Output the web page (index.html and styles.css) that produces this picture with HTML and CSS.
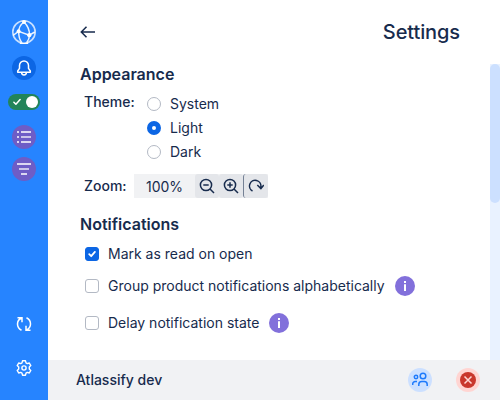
FILE: index.html
```html
<!DOCTYPE html>
<html lang="en">
<head>
<meta charset="utf-8">
<title>Settings</title>
<link rel="stylesheet" href="styles.css">
</head>
<body>
<div class="app">
  <nav class="sidebar">
    <div class="nav-group">
      <svg class="logo" viewBox="0 0 24 24" fill="none" stroke="#fff">
        <circle cx="12" cy="12" r="11.2" stroke-width="1.6" stroke-opacity=".75"/>
        <path d="M12 2C8.5 4.500 6.700 8 6.700 12c0 4.500 1 8 3 10.500M12 2c3.500 3.500 5.600 8 5.500 13-.1 3-1 5.500-2.800 7.600M1 15.500 6.500 11.300 17.300 15.200 22.800 12" stroke-width="1.500" stroke-opacity=".9"/>
        <path d="M8 23c2.500.8 5.500.8 8 0" stroke-width="1.500"/>
        <g fill="#fff" stroke="none"><circle cx="12" cy="2" r="2"/><circle cx="6.600" cy="11.300" r="2"/><circle cx="17.300" cy="15.200" r="2.100"/></g>
      </svg>
      <span class="round bell">
        <svg class="icon16" viewBox="0 0 16 16" fill="none" stroke="#fff" stroke-width="1.500" stroke-linejoin="round"><path d="M8 .9a4.500 4.500 0 0 0-4.500 4.500v3L1.700 11v1.300h12.600V11l-1.800-2.600v-3A4.500 4.500 0 0 0 8 .9ZM5.600 12.500a2.400 2.400 0 0 0 4.800 0"/></svg>
      </span>
      <span class="toggle">
        <svg class="toggle-check" viewBox="0 0 8 8" fill="none" stroke="#fff" stroke-width="1.500" stroke-linecap="round" stroke-linejoin="round"><path d="m.9 4.300 2 2L7.100 1.600"/></svg>
        <span class="knob"></span>
      </span>
      <span class="round purple">
        <svg class="icon16" viewBox="0 0 16 16" stroke="#fff" stroke-width="1.500"><path d="M5 3h10M5 13h10M1 3h2M1 8h2M1 13h2"/><path d="M5 8h10" stroke-opacity=".85"/></svg>
      </span>
      <span class="round purple filter">
        <svg class="icon16" viewBox="0 0 16 16" stroke="#fff" stroke-width="1.500"><path d="M1 3h14M5 13h6"/><path d="M3 8h10" stroke-opacity=".85"/></svg>
      </span>
    </div>
    <div class="nav-group">
      <svg class="icon16" viewBox="0 0 16 16" fill="none" stroke="#fff" stroke-width="1.500"><path d="M1.500 1.700H6v4.500M5.800 2C3 3.100 1.500 5.300 1.500 8c0 2.900 1.500 5 4 6.200M14.500 14.300H10V9.800M10.200 14c2.800-1.100 4.300-3.300 4.300-6 0-2.900-1.500-5-4-6.200"/></svg>
      <svg class="icon16 gear" viewBox="0 0 16 16" fill="none" stroke="#fff" stroke-width="1.400" stroke-linejoin="round"><path d="M6.500.8h3l.5 2 1.300.8 2-.6 1.500 2.600L13.300 7v2l1.500 1.400-1.500 2.600-2-.6-1.300.8-.5 2h-3l-.5-2-1.300-.8-2 .6-1.500-2.600L2.700 9V7L1.200 5.600 2.700 3l2 .6L6 2.800Z"/><circle cx="8" cy="8" r="2.100"/></svg>
    </div>
  </nav>
  <main class="main">
    <header class="header">
      <svg class="icon16" viewBox="0 0 16 16" fill="none" stroke="#172b4d" stroke-width="1.500"><path d="M15 8H2M6.500 2.700 1.300 8l5.200 5.300"/></svg>
      <h1>Settings</h1>
    </header>
    <div class="scroller">
      <div class="content">
        <h2>Appearance</h2>
        <div class="theme">
          <span class="label">Theme:</span>
          <div class="radios">
            <div class="radio-row"><span class="radio"></span>System</div>
            <div class="radio-row"><span class="radio selected"></span>Light</div>
            <div class="radio-row"><span class="radio"></span>Dark</div>
          </div>
        </div>
        <div class="zoom">
          <span class="label">Zoom:</span>
          <div class="zoom-group">
            <span class="percent">100%</span>
            <span class="zoom-button"><svg class="icon16" viewBox="0 0 16 16" fill="none" stroke="#172b4d" stroke-width="1.500"><circle cx="7" cy="7" r="5.600"/><path d="m11 11 4 4M4.300 7h5.400"/></svg></span>
            <span class="zoom-button"><svg class="icon16" viewBox="0 0 16 16" fill="none" stroke="#172b4d" stroke-width="1.500"><circle cx="7" cy="7" r="5.600"/><path d="m11 11 4 4M4.300 7h5.400M7 4.300v5.400"/></svg></span>
            <span class="zoom-button reset"><svg class="icon16" viewBox="0 0 16 16" fill="none" stroke="#172b4d" stroke-width="1.500"><path d="M4.500 13A5.700 5.700 0 1 1 12.900 8.500v1.500M9.300 7l3.600 3.600L15.800 7"/></svg></span>
          </div>
        </div>
        <h2 class="notifications">Notifications</h2>
        <div class="check-row first"><span class="box checked"><svg viewBox="0 0 12 12" fill="none" stroke="#fff" stroke-width="1.800" stroke-linecap="round" stroke-linejoin="round"><path d="m3.200 6.200 2 2 3.700-4.300"/></svg></span>Mark as read on open</div>
        <div class="check-row group"><span class="box"></span>Group product notifications alphabetically<span class="info"><svg viewBox="0 0 20 20" fill="#fff"><path d="M9 5h2v2H9zM9 8.300h2V15H9z"/></svg></span></div>
        <div class="check-row delay"><span class="box"></span>Delay notification state<span class="info"><svg viewBox="0 0 20 20" fill="#fff"><path d="M9 5h2v2H9zM9 8.300h2V15H9z"/></svg></span></div>
        <h2 class="system">System</h2>
      </div>
      <div class="track"><div class="thumb"></div></div>
    </div>
    <footer class="footer">
      <span class="version">Atlassify dev</span>
      <span class="round people"><svg class="icon16" viewBox="0 0 16 16" fill="none" stroke="#1d7afc" stroke-width="1.500"><circle cx="11" cy="4" r="2.800"/><circle cx="4" cy="5" r="1.700"/><path d="M6.800 14v-1.500a3 3 0 0 1 3-3h2.400a3 3 0 0 1 3 3V14M.7 13v-1a2.500 2.500 0 0 1 2.500-2.500H5"/></svg></span>
      <span class="round quit"><svg class="icon16" viewBox="0 0 16 16"><circle cx="8" cy="8" r="8" fill="#c9372c"/><path d="m4.500 4.500 7 7m0-7-7 7" stroke="#ffd5d2" stroke-width="1.500"/></svg></span>
    </footer>
  </main>
</div>
</body>
</html>
```

FILE: styles.css
```css
* { box-sizing: border-box; }
body { margin: 0; font: 14px/20px Inter, sans-serif; color: #172b4d; }
svg { display: block; flex: none; }
h1, h2 { margin: 0; }
h1 { font-size: 20px; line-height: 24px; font-weight: 500; letter-spacing: -.1px; }
h2 { font-size: 16px; line-height: 20px; font-weight: 600; }
.app { display: flex; width: 500px; height: 400px; overflow: hidden; background: #fff; }
.sidebar { display: flex; flex-direction: column; justify-content: space-between; width: 48px; padding: 20px 0 24px; background: #2684ff; }
.nav-group { display: flex; flex-direction: column; align-items: center; }
.logo { width: 24px; height: 24px; }
.icon16 { width: 16px; height: 16px; }
.round { display: flex; flex: none; align-items: center; justify-content: center; width: 24px; height: 24px; border-radius: 50%; }
.bell { margin-top: 12px; background: #0c66e4; }
.toggle { display: flex; align-items: center; justify-content: space-between; width: 32px; height: 16px; margin: 14px 0 15px; padding: 0 2px 0 5px; border-radius: 8px; background: #22845a; }
.toggle-check { width: 8px; height: 8px; }
.knob { width: 12px; height: 12px; border-radius: 50%; background: #fff; }
.purple { background: #6e5dc6; }
.filter { margin-top: 8px; }
.gear { margin-top: 28px; }
.main { display: flex; flex: 1; flex-direction: column; min-width: 0; }
.header { display: flex; flex: none; align-items: center; justify-content: space-between; height: 64px; padding: 0 40px 0 32px; }
.scroller { display: flex; flex: 1; min-height: 0; overflow: hidden; }
.content { flex: 1; padding-left: 32px; }
.track { width: 10px; background: #e9f2ff; }
.thumb { height: 139px; border-radius: 5px; background: #cce0ff; }
.label { font-weight: 500; }
.theme { display: flex; margin-top: 8px; padding-left: 4px; }
.theme .label { width: 63px; }
.radios { padding-top: 2px; }
.radio-row { display: flex; align-items: center; gap: 9px; height: 20px; margin-bottom: 4px; }
.radio { width: 14px; height: 14px; border: 1px solid #b3b9c4; border-radius: 50%; }
.selected { border: 5px solid #0c66e4; }
.zoom { display: flex; align-items: center; margin-top: 8px; padding-left: 4px; }
.zoom .label { width: 50px; }
.zoom-group { display: flex; height: 24px; background: #f1f2f4; }
.percent { width: 61px; padding-left: 12px; line-height: 26px; }
.zoom-button { display: flex; align-items: center; justify-content: center; width: 24px; border-radius: 3px; background: #e4e6ea; }
.reset { width: 25px; border-left: 1px solid #758195; }
.notifications { margin-top: 16px; }
.check-row { display: flex; align-items: center; height: 20px; padding-left: 5px; }
.first { margin-top: 10px; }
.group { margin-top: 12px; }
.delay { margin-top: 17px; }
.box { width: 14px; height: 14px; margin-right: 9px; border: 1px solid #b3b9c4; border-radius: 3px; }
.checked { border-color: #0c66e4; background: #0c66e4; }
.info { width: 20px; height: 20px; margin-left: 10px; border-radius: 50%; background: #8270db; }
.system { margin-top: 24px; }
.footer { display: flex; flex: none; align-items: center; height: 40px; padding: 0 20px 0 28px; background: #f1f2f4; }
.version { flex: 1; font-weight: 500; }
.people { margin-right: 24px; background: #cce0ff; }
.quit { background: #ffd5d2; }
```
